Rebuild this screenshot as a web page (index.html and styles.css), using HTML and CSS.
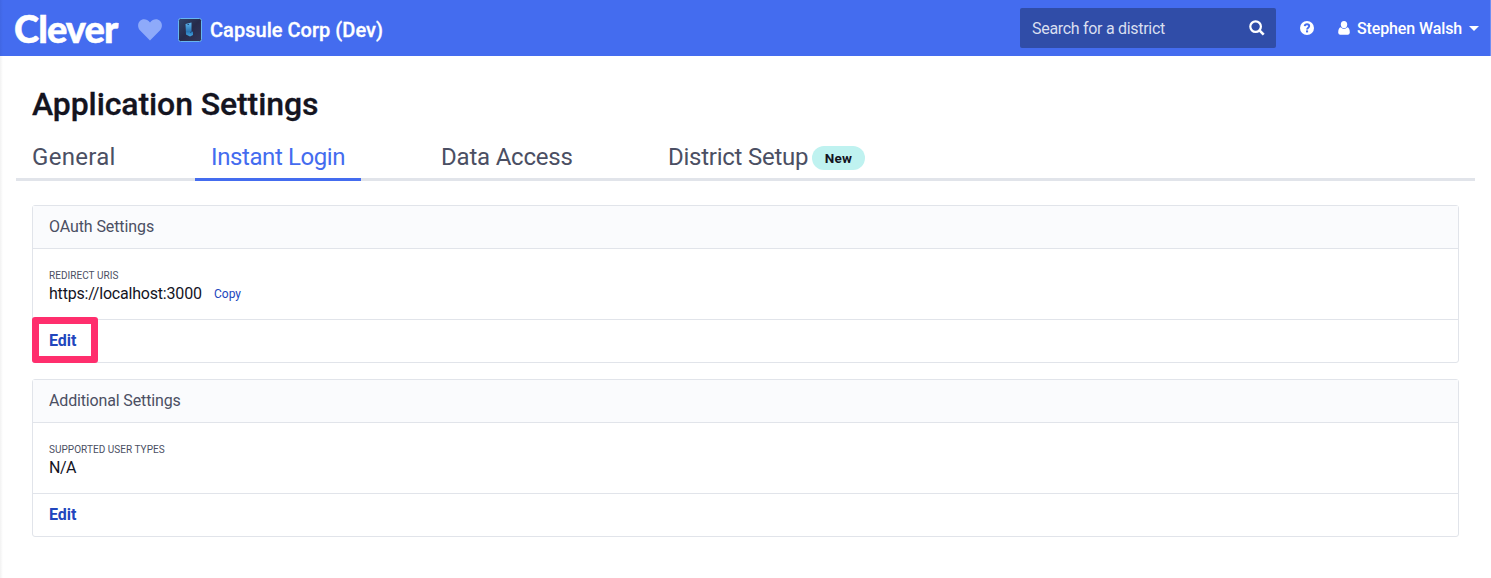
FILE: index.html
```html
<!DOCTYPE html>
<html lang="en">
<head>
<meta charset="utf-8">
<title>Application Settings</title>
<link rel="stylesheet" href="styles.css">
</head>
<body>
<header class="topbar">
  <span class="logo">Clever</span>
  <svg class="heart" width="24" height="22" viewBox="0 0 24 22"><path d="M12 21.5 1.9 11.3C-.6 8.5-.4 4.200 1.900 2 4.500-.5 9-.3 12 3.400 15-.3 19.500-.5 22.100 2c2.300 2.200 2.500 6.500 0 9.300z"/></svg>
  <svg class="app-icon" width="24" height="24" viewBox="0 0 24 24">
    <defs>
      <linearGradient id="tile" x1="0" y1="0" x2="1" y2="1"><stop offset="0" stop-color="#30466c"/><stop offset=".5" stop-color="#262b4b"/><stop offset="1" stop-color="#343658"/></linearGradient>
      <linearGradient id="capsule" x1="0" y1="0" x2="0" y2="1"><stop offset="0" stop-color="#5fb5ec"/><stop offset=".65" stop-color="#2874b4"/><stop offset="1" stop-color="#43a4e0"/></linearGradient>
    </defs>
    <rect x=".5" y=".5" width="23" height="23" rx="2" fill="url(#tile)" stroke="#68b5ef"/>
    <path d="M7.500 6 13.500 4.500v8.500l1.500 1v3l-3 1.500-4-2z" fill="url(#capsule)"/>
    <path d="M9.500 6.500h1.500M12 14.500l2-1" stroke="#1d4a80" fill="none"/>
  </svg>
  <span class="app-name">Capsule Corp (Dev)</span>
  <div class="search">
    <span class="search-hint">Search for a district</span>
    <svg width="16" height="16" viewBox="0 0 16 16" fill="none" stroke="#fff"><circle cx="6.600" cy="6.600" r="5.300" stroke-width="2.200"/><path d="m10.700 10.700 4 4" stroke-width="2.600"/></svg>
  </div>
  <svg class="help" width="14" height="14" viewBox="0 0 14 14"><circle cx="7" cy="7" r="7" fill="#fff"/><path d="M4.700 5.200C4.900 3.800 5.900 3.300 7 3.300c1.300 0 2.200.7 2.200 1.800C9.200 6.800 7.100 6.700 7.100 8.500" fill="none" stroke="#446cef" stroke-width="1.900"/><path d="M6 9.400h2.100v2H6z" fill="#446cef"/></svg>
  <svg class="person" width="12" height="14" viewBox="0 0 12 14"><ellipse cx="6" cy="3.600" rx="3.200" ry="3.600"/><path d="M2.700 6.300Q6 9.600 9.300 6.300 11.800 7 11.800 11.800 11.500 13.800 9.800 13.800H2.200Q.5 13.800.2 11.800.2 7 2.700 6.300z"/></svg>
  <span class="user">Stephen Walsh</span>
  <svg class="caret" width="10" height="5" viewBox="0 0 10 5"><path d="M0 0h10L5 5z"/></svg>
</header>
<main class="page">
  <h1 class="title">Application Settings</h1>
  <nav class="tabs">
    <a class="tab tab-general">General</a>
    <a class="tab tab-login active">Instant Login</a>
    <a class="tab tab-data">Data Access</a>
    <a class="tab tab-setup"><span class="setup-label">District Setup</span><span class="badge">New</span></a>
  </nav>
  <section class="card">
    <h2 class="card-head"><span class="t-oauth">OAuth Settings</span></h2>
    <div class="card-body">
      <div class="label t-uris">REDIRECT URIS</div>
      <div class="value"><span class="t-url">https://localhost:3000</span><a class="copy">Copy</a></div>
    </div>
    <div class="card-foot"><a class="edit">Edit</a><span class="highlight"></span></div>
  </section>
  <section class="card">
    <h2 class="card-head"><span class="t-additional">Additional Settings</span></h2>
    <div class="card-body">
      <div class="label t-types">SUPPORTED USER TYPES</div>
      <div class="value"><span class="t-na">N/A</span></div>
    </div>
    <div class="card-foot"><a class="edit">Edit</a></div>
  </section>
</main>
<div class="edge"></div>
</body>
</html>
```
FILE: styles.css
```css
* { box-sizing: border-box; }
body { margin: 0; height: 578px; overflow: hidden; background: #fff; color: #14141f; font-family: Roboto, "Liberation Sans", sans-serif; font-size: 16px; }
span, a { white-space: nowrap; }
svg { display: block; flex: none; }

.topbar { display: flex; align-items: center; height: 56px; padding-left: 14px; background: #446cef; border-right: 1px solid #6f8df3; color: #fff; }
.logo { width: 124px; font: 900 38px/56px Lato, sans-serif; letter-spacing: -.9px; -webkit-text-stroke: .5px #fff; }
.heart { margin-top: 4px; fill: #8eaafa; }
.app-icon { margin: 4px 8px 0 16px; }
.app-name { width: 810px; padding-top: 4px; font-size: 20px; font-weight: 500; letter-spacing: .03px; -webkit-text-stroke: .3px #fff; }
.search { display: flex; align-items: center; justify-content: space-between; flex: none; width: 256px; height: 40px; padding: 0 11px 0 12px; border-radius: 2px; background: #304da8; }
.search-hint { color: #d9dff0; letter-spacing: -.3px; }
.help { margin-left: 24px; }
.person { margin: 0 7px 0 24px; fill: #fff; }
.user { width: 106px; font-weight: 500; letter-spacing: -.12px; }
.caret { margin-left: 6px; fill: #fff; }

.page { padding: 28px 32px 0; }
.title { margin: 0; font-size: 32px; line-height: 40px; height: 42px; font-weight: 500; letter-spacing: -.1px; -webkit-text-stroke: .3px #14141f; }
.tabs { display: flex; height: 55px; margin: 0 -16px 24px; border-bottom: 3px solid #e1e4ea; }
.tab { height: 55px; padding: 14px 16px 0; color: #4b4f63; font-size: 24px; line-height: 34px; }
.tab-general { width: 115px; margin-right: 64px; letter-spacing: .3px; }
.tab-login { width: 166px; margin-right: 64px; letter-spacing: -.4px; }
.tab-data { width: 163px; margin-right: 64px; letter-spacing: -.2px; }
.tab-setup { display: flex; align-items: flex-start; letter-spacing: -.25px; }
.setup-label { width: 144px; }
.active { color: #446cef; border-bottom: 3px solid #446cef; }
.badge { width: 53px; height: 24px; margin-top: 6px; border-radius: 12px; background: #bff2f0; color: #14141f; font-size: 13.500px; font-weight: 700; line-height: 25px; letter-spacing: .2px; text-align: center; }

.card { height: 158px; margin-bottom: 16px; border: 1px solid #e1e4ea; border-radius: 3px; }
.card-head { height: 43px; margin: 0; padding-left: 16px; border-bottom: 1px solid #e1e4ea; background: #fafbfd; color: #4b4f63; font-size: 16px; font-weight: 400; line-height: 42px; }
.t-oauth { letter-spacing: -.1px; }
.t-additional { letter-spacing: -.15px; }
.card-body { height: 71px; padding: 20px 16px 0; border-bottom: 1px solid #e1e4ea; }
.label { color: #4b4f63; font-size: 10px; line-height: 14px; letter-spacing: .04px; }
.value { display: flex; align-items: center; line-height: 22px; }
.t-url { width: 165px; letter-spacing: -.2px; }
.t-na { letter-spacing: -.5px; }
.copy { color: #2146bd; font-size: 12px; }
.card-foot { position: relative; height: 42px; padding-left: 16px; line-height: 42px; }
.edit { color: #2146bd; font-weight: 700; }
.highlight { position: absolute; left: -1px; top: -3px; width: 66px; height: 46px; border: 7px solid #ff2e6d; border-radius: 3px; }
.edge { position: absolute; left: 0; top: 0; width: 3px; height: 578px; background: linear-gradient(90deg, rgba(0,0,0,.05), rgba(0,0,0,0)); }
```
